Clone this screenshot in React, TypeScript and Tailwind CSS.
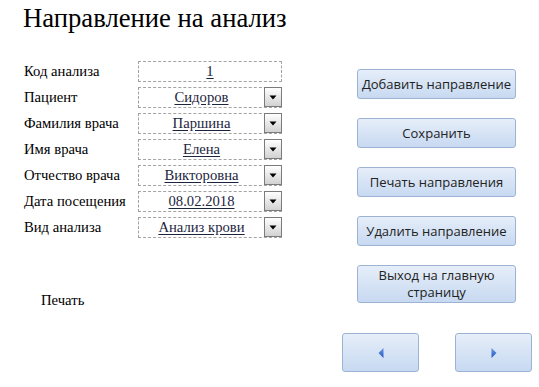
import React from "react";

const SERIF = "font-['Liberation_Serif',serif]";
const SANS = "font-['Open_Sans',sans-serif]";

function DropBtn() {
  return (
    <div className="w-[18px] h-[20px] -mt-px -mr-px border border-[#7b7b7b] bg-gradient-to-b from-white to-[#d2d2d2] flex items-center justify-center shrink-0">
      <svg width="8" height="5" viewBox="0 0 8 5">
        <path d="M0.5 0.5 L7.5 0.5 L4 4.5 Z" fill="#000" />
      </svg>
    </div>
  );
}

function Field({ label, value, drop = true }: { label: string; value: string; drop?: boolean }) {
  return (
    <div className="flex items-center h-[21px] mb-[5px]">
      <div className={`w-[114px] text-[14.67px] leading-none text-black ${SERIF}`}>{label}</div>
      <div className="w-[144px] h-[21px] border border-dashed border-[#a3a3a3] flex items-start">
        <div className="flex-1 h-full flex items-center justify-center">
          <span className={`text-[14.67px] leading-none text-[#1c2540] underline underline-offset-2 ${SERIF}`}>{value}</span>
        </div>
        {drop && <DropBtn />}
      </div>
    </div>
  );
}

function ActionBtn({ children, tall = false }: { children: React.ReactNode; tall?: boolean }) {
  return (
    <div
      className={`w-[159px] ${tall ? "h-[38px]" : "h-[30px]"} rounded-[3px] border border-[#9db3d4] bg-gradient-to-b from-[#e6eef9] to-[#c7d9f1] flex items-center justify-center text-center text-[13px] leading-[17px] text-[#222] ${SANS}`}
    >
      {children}
    </div>
  );
}

function NavBtn({ dir }: { dir: "left" | "right" }) {
  return (
    <div className="w-[77px] h-[39px] rounded-[3px] border border-[#9db3d4] bg-gradient-to-b from-[#e6eef9] to-[#c7d9f1] flex items-center justify-center">
      <svg width="6" height="10" viewBox="0 0 6 10">
        <defs>
          <linearGradient id={`g${dir}`} x1="0" y1="0" x2="0" y2="1">
            <stop offset="0" stopColor="#6f9be6" />
            <stop offset="1" stopColor="#1f54c2" />
          </linearGradient>
        </defs>
        {dir === "left" ? (
          <path d="M5.5 0 L5.5 10 L0.5 5 Z" fill={`url(#g${dir})`} />
        ) : (
          <path d="M0.5 0 L0.5 10 L5.5 5 Z" fill={`url(#g${dir})`} />
        )}
      </svg>
    </div>
  );
}

export default function App() {
  return (
    <div className="w-[539px] h-[387px] bg-white overflow-hidden">
      <div className="h-[61px] pl-[23px] pt-[3px]">
        <h1 className={`text-[26.67px] leading-[30px] text-black ${SERIF}`}>Направление на анализ</h1>
      </div>
      <div className="flex h-[272px]">
        <div className="w-[333px] pl-[24px]">
          <Field label="Код анализа" value="1" drop={false} />
          <Field label="Пациент" value="Сидоров" />
          <Field label="Фамилия врача" value="Паршина" />
          <Field label="Имя врача" value="Елена" />
          <Field label="Отчество врача" value="Викторовна" />
          <Field label="Дата посещения" value="08.02.2018" />
          <Field label="Вид анализа" value="Анализ крови" />
          <div className={`pl-[17px] mt-[55px] text-[14.67px] leading-none text-black ${SERIF}`}>Печать</div>
        </div>
        <div className="pl-[24px] pt-[8px] flex flex-col gap-[19px]">
          <ActionBtn>Добавить направление</ActionBtn>
          <ActionBtn>Сохранить</ActionBtn>
          <ActionBtn>Печать направления</ActionBtn>
          <ActionBtn>Удалить направление</ActionBtn>
          <ActionBtn tall>Выход на главную<br />страницу</ActionBtn>
        </div>
      </div>
      <div className="flex pl-[342px] gap-[36px]">
        <NavBtn dir="left" />
        <NavBtn dir="right" />
      </div>
    </div>
  );
}
